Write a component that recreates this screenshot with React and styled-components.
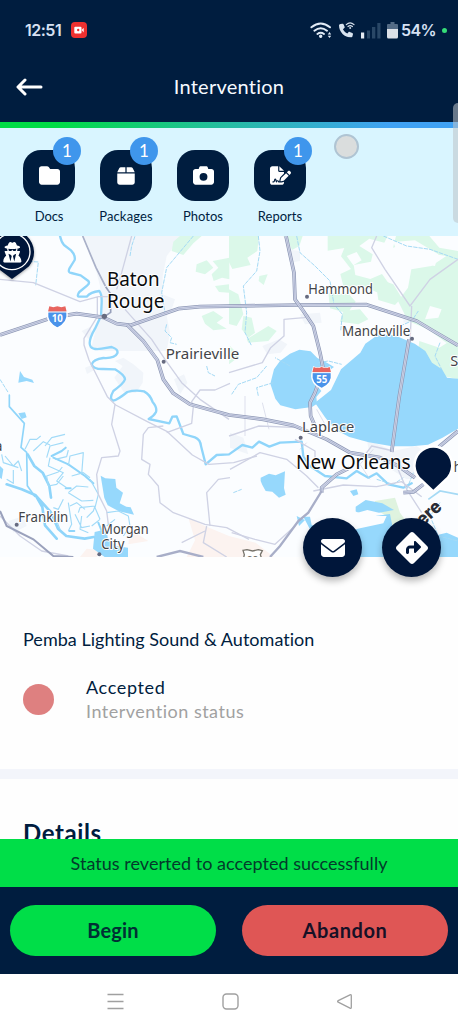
import React from "react";
import styled, { createGlobalStyle } from "styled-components";
import {
  FaFolder,
  FaBox,
  FaCamera,
  FaFileSignature,
  FaEnvelope,
  FaDiamondTurnRight,
  FaPhone,
  FaUserSecret,
} from "react-icons/fa6";

const navy = "#001d3f";
const deep = "#00163a";
const green = "#00de48";

const GlobalStyle = createGlobalStyle`
  * { box-sizing: border-box; }
  body { margin: 0; background: #fff; font-family: Lato, "Open Sans", sans-serif; color: ${navy}; }
  button { border: 0; padding: 0; font: inherit; color: inherit; background: none; }
`;

const Screen = styled.div`
  position: relative;
  width: 458px;
  height: 1027px;
  display: flex;
  flex-direction: column;
  overflow: hidden;
  background: #fefefe;
`;

const StatusBar = styled.div`
  height: 60px;
  flex: none;
  display: flex;
  align-items: center;
  padding: 0 11px 0 25px;
  background: ${navy};
  color: #d6e1f3;
`;
const Clock = styled.span`
  width: 46px;
  font: 600 16px/20px Inter, sans-serif;
  letter-spacing: -0.5px;
`;
const Indicators = styled.div`
  margin-left: auto;
  display: flex;
  align-items: center;
`;
const Percent = styled.span`
  font: 600 16px/20px Inter, sans-serif;
  letter-spacing: -0.6px;
  margin: 0 6px 0 3px;
`;
const LiveDot = styled.i`
  width: 5px;
  height: 5px;
  border-radius: 50%;
  background: #35dd78;
`;

const Header = styled.header`
  height: 62px;
  flex: none;
  display: grid;
  grid-template-columns: 60px 1fr 60px;
  align-items: center;
  background: ${navy};
  color: #f6faff;
  padding-bottom: 8px;
`;
const BackButton = styled.button`
  padding-left: 16px;
  display: flex;
`;
const Title = styled.h1`
  margin: 0;
  padding-bottom: 2px;
  text-align: center;
  font-size: 20px;
  font-weight: 400;
  line-height: 26px;
  letter-spacing: 0.25px;
`;
const Accent = styled.div`
  height: 6px;
  flex: none;
  background: linear-gradient(90deg, #00dc46 12%, #25bd9e 48%, #40a2f4 85%);
`;

const Shortcuts = styled.nav`
  height: 108px;
  flex: none;
  display: flex;
  gap: 13px;
  padding: 22px 17px 0;
  background: #d9f5ff;
`;
const Shortcut = styled.div`
  width: 64px;
  display: flex;
  flex-direction: column;
  align-items: center;
  gap: 7px;
`;
const Tile = styled.div`
  position: relative;
  width: 52px;
  height: 51px;
  border-radius: 18px;
  display: grid;
  place-items: center;
  background: ${navy};
  color: #fff;
  font-size: ${(p) => p.$icon || 21}px;
`;
const Badge = styled.span`
  position: absolute;
  top: -13px;
  right: -6px;
  width: 28px;
  height: 28px;
  border-radius: 50%;
  display: grid;
  place-items: center;
  background: #3f96ec;
  font-size: 17px;
  line-height: 28px;
`;
const ShortcutLabel = styled.span`
  font-size: 13px;
  line-height: 17px;
  letter-spacing: ${(p) => p.$track || 0}px;
  white-space: nowrap;
`;

const MapArea = styled.section`
  position: relative;
  height: 321px;
  flex: none;
`;
const MapCanvas = styled.svg`
  display: block;
  width: 458px;
  height: 321px;
`;
const Actions = styled.div`
  position: absolute;
  right: 17px;
  bottom: -20px;
  display: flex;
  gap: 20px;
`;
const RoundButton = styled.button`
  width: 59px;
  height: 59px;
  border-radius: 50%;
  display: grid;
  place-items: center;
  background: ${deep};
  color: #fff;
  font-size: ${(p) => p.$icon}px;
  box-shadow: 0 4px 7px rgba(0, 0, 0, 0.28);
`;

const Summary = styled.section`
  height: 212px;
  flex: none;
  padding: 69px 23px 0;
`;
const Company = styled.h2`
  margin: 0;
  font-size: 18px;
  font-weight: 400;
  line-height: 26px;
  letter-spacing: 0.02px;
  white-space: nowrap;
`;
const StatusRow = styled.div`
  display: flex;
  align-items: center;
  gap: 32px;
  margin-top: 23px;
`;
const StatusDot = styled.i`
  width: 31px;
  height: 31px;
  border-radius: 50%;
  background: #de8080;
`;
const StatusText = styled.div`
  display: flex;
  flex-direction: column;
  font-size: 18px;
  line-height: 24px;
`;
const StatusName = styled.span`
  letter-spacing: 0.65px;
`;
const StatusCaption = styled.span`
  color: #a1a1a1;
  letter-spacing: 0.5px;
`;

const Details = styled.section`
  height: 70px;
  flex: none;
  overflow: hidden;
  border-top: 10px solid #f3f5fb;
  padding: 37px 23px 0;
`;
const DetailsTitle = styled.h2`
  margin: 0;
  font: 700 24px/34px Lato, sans-serif;
  letter-spacing: 0.6px;
`;

const Toast = styled.div`
  height: 48px;
  flex: none;
  display: grid;
  place-items: center;
  background: ${green};
  color: #033b2b;
  font-size: 18px;
  letter-spacing: 0.03px;
`;
const Footer = styled.div`
  height: 87px;
  flex: none;
  display: flex;
  gap: 26px;
  padding: 18px 10px;
  background: ${navy};
`;
const Pill = styled.button`
  flex: 1;
  height: 51px;
  border-radius: 26px;
  padding-bottom: 1px;
  background: ${(p) => p.$bg};
  color: ${(p) => p.$fg};
  font-size: 20px;
  font-weight: 700;
  letter-spacing: ${(p) => p.$track}px;
`;
const SystemNav = styled.div`
  height: 53px;
  flex: none;
  display: flex;
  align-items: center;
  justify-content: space-between;
  padding: 2px 105px 0 107px;
  background: #fff;
`;

const TouchMark = styled.i`
  position: absolute;
  left: 334px;
  top: 134px;
  width: 25px;
  height: 25px;
  border-radius: 50%;
  background: #dadddd;
  border: 2px solid #afc4d3;
`;
const EdgeHandle = styled.i`
  position: absolute;
  right: 0;
  top: 103px;
  width: 5px;
  height: 120px;
  border-radius: 5px 0 0 5px;
  background: rgba(190, 195, 201, 0.55);
`;

const shortcuts = [
  { label: "Docs", icon: FaFolder, count: 1, track: -0.1 },
  { label: "Packages", icon: FaBox, count: 1, track: 0.15, size: 20 },
  { label: "Photos", icon: FaCamera, track: 0 },
  { label: "Reports", icon: FaFileSignature, count: 1, track: 0, size: 21 },
];

const water = "#96d8fc";

const Road = ({ d }) => (
  <g fill="none" strokeLinejoin="round">
    <path d={d} stroke="#8e98b5" strokeWidth="11" />
    <path d={d} stroke="#d7dcef" strokeWidth="6.5" />
    <path d={d} stroke="#8e98b5" strokeWidth="1.6" />
  </g>
);

/* A label is one or more lines, each fitted to its own width. */
const Place = ({ x, y, lines, leading = 46, size = 42, city }) => (
  <text
    fontFamily='"Noto Sans", "Open Sans", sans-serif'
    fontSize={size}
    fill={city ? "#080a0c" : "#424448"}
    stroke="#fff"
    strokeWidth="6"
    strokeLinejoin="round"
    paintOrder="stroke"
  >
    {lines.map(([text, width], i) => (
      <tspan key={text} x={x} y={y + i * leading} textLength={width} lengthAdjust="spacingAndGlyphs">
        {text}
      </tspan>
    ))}
  </text>
);

const Interstate = ({ x, y, number }) => (
  <g transform={`translate(${x} ${y})`}>
    <path d="M-24-31Q-12-26 0-31Q12-26 24-31L29-12Q34 18 0 34Q-34 18-29-12Z" fill="#4a93ea" stroke="#fff" strokeWidth="4" />
    <path d="M-24-31Q-12-26 0-31Q12-26 24-31L28-15H-28Z" fill="#e8655f" />
    <path d="M-29-14H29" stroke="#fff" strokeWidth="3" />
    <text y="16" textAnchor="middle" fontFamily='"Open Sans", sans-serif' fontWeight="700" fontSize="29" fill="#fff">
      {number}
    </text>
  </g>
);

function RegionMap() {
  return (
    <MapCanvas viewBox="0 0 1374 963">
      <rect width="1374" height="963" fill="#fbfdff" />

      {/* built-up areas */}
      <g fill="#f1f5fa">
        <path d="M248 0H545L500 60 488 120 487 175 525 190 515 220 500 240 510 290 500 345H300L275 330 290 270 305 230 300 150 290 110Z" />
        <path d="M245 285l25-12 10 25-12 14zM255 395l20-8 8 15-22 12zM345 375l25-10 30 20 30 25-2 30-20 30-35 0-30-45 25-35z" />
        <path d="M787 330l50-20 25 15-20 25-40 5zM900 235l60-5 5 30-50 5zM860 40l40 5v30l-30 5zM1215 200l50 15-5 40-50 5zM1100 610l80 35 70-15 40 30-10 60-60 10-110-70z" />
        <path d="M690 590l40 15 15 50-55-20zM522 430l30-15 10 25-22 35zM25 855l45-15 10 30-40 20z" />
      </g>

      {/* sandy areas */}
      <path d="M565 845l50 25 72 30 80 20 55 43H560l25-50zM240 963l20-25 45 5-15 20zM390 880l55 35-60 10z" fill="#fcf3f0" />

      {/* woodland */}
      <g fill="#dbf8e9">
        <path d="M540 0h65l-25 22-30 35-35-12 5-28zM590 85l30-12 20 22-25 20-28-8zM638 75l50-10v65l-22-5-25 10-6-20 20-20zM605 240l35-15 30 20-20 15 30 18-40 5-25-20zM645 150l42-5v25l-30-2z" />
        <path d="M687 0h90l-5 45-30 20 10 22-55 12-10-20zM850 0h58l-10 30-22 12-8-18zM778 120l25-5-12 32-15-12zM687 160l28 15 15 60-20 35-23-6zM730 240l25 5 10 45-20 15-20-25z" />
        <path d="M983 0h180l-10 20-45-12-30 22 40 25-5 22-52 10 5 30 45 12 35-15 25 35-40 20-45-20-55 5-10-40 32-15-30-38 10-25-50 8z" />
        <path d="M1188 0h100l30 35 56 10v270l-35 5-55-40-60-25-30-60 30-40 10-55 60-10 45-30-65-10-60-25-35 10z" />
        <path d="M1125 125l55 20 25 40-20 22-50-15zM985 170l62 5 20 22-25 35-52-15zM1030 225l50-5 25 30-30 15-55-8zM740 310l65-40 25 15-25 30-60 5zM690 330l30 30-33 25z" />
        <path d="M1258 315l60 20 56-35v130l-55-12-25-30-40-42z" />
        <path d="M1125 795l60-10 15 45 40 55-35 50-45-95-35-20z" fill="#dff3df" />
      </g>
      <g fill="#fbfdff">
        <path d="M1180 18l65-5 70 42-10 35-65-10-50-35zM1040 60l30-12 15 25-25 15zM1150 100l35 5 5 20-25 5zM1290 210l35 10-10 25-40 5zM1080 180l20-10 20 15-20 10z" />
      </g>

      {/* lakes and bays */}
      <g fill={water}>
        <path d="M822 400l18-25 30-22 28-12 34 5 20 20 30 15 20 12-45 32-5 25 12 15-15 18 2 20-15 10-50 7-45-12-15-20-15-45z" />
        <path d="M945 500l48-38 30-62 58-50 15-27 38-27 50 2 60 25 32 22 20 35 30 20 15 25 33 3v150l-48 28-42 20-48 5-60 0-70-12-58-16-45-24-28-35z" />
        <path d="M302 719l14 8 30 2 3 26 20 15-10 32 20 10 13 2 10 22-45-10-34-18-10-22z" />
        <path d="M782 725l25-12 20 5 28-12-3 50 5 20-20 9-20-18-20-2-10-18-5-12zM1067 812l30-20 50 10 35 20-45 8-35-8-35 10zM1050 765l20-5 5 15-15 5z" />
        <path d="M284 888l35-8 5 30 25 20 35 5v28h-70l-35-25zM910 842l20 0 5 25 60 15 35-5 45-18 55-20 40-5 10 50 40 30-10 49H1070l-35-30-90-25z" />
        <path d="M0 690l10 10-5 30-5-5zM55 532l20-3 5 15-15 5zM60 405l12 18 25 8 5 10-22-6-25 5zM890 840l25 12-18 18zM1300 900l40-10 34 15v58h-60z" />
      </g>
      <path d="M950 840l40-25 60 5 50 20 60 0-10 22-70 15-60 15-30-25z" fill="#fbfdff" />

      {/* rivers */}
      <g fill="none" stroke="#8fd5fa" strokeLinejoin="round" strokeLinecap="round">
        <path d="M180 0Q184 18 192 27L213 43Q227 58 224 72L208 98Q203 110 214 111L242 118 265 135Q270 142 262 148L238 168Q228 182 240 182L260 182Q272 168 298 165Q306 175 305 200L303 240 285 278Q262 318 272 332Q280 342 305 338L335 333Q356 340 352 352Q345 368 310 366Q280 370 275 385Q280 400 310 399L345 400Q375 418 375 430Q372 442 340 465Q326 490 340 494Q352 492 382 468Q405 461 432 466Q450 475 458 498Q472 515 468 528Q462 540 446 549L508 562 517 542 530 541 550 594 585 604Q601 610 603 630L617 685 650 657 687 655 727 627 757 635 777 617 808 632 840 620 905 617 910 662 930 690 975 720 1040 727 1070 705 1105 725 1130 712 1165 745 1210 755 1235 742" strokeWidth="7" />
        <path d="M28 477v35l45 50-10 72 17 15 2 100 22 32" strokeWidth="5" />
        <path d="M83 655l20 35 25 20 20 40 5 35M20 745l45 15 42 18 20 35 8 55 35 40M107 778l45 50 22 50 25 22 55 8 27-5" strokeWidth="8" />
        <path d="M155 660l30-15 12-10M160 665l45 20 50 35 25 22M197 757h15M208 885h15M295 860l10 25" strokeWidth="6" />
      </g>
      <path
        d="M75 640l15-30 20 0 12-10M100 645l30-28 20 10M135 630l20-25 40-10M140 665l10-35 40-10M150 665l-5 25 45 20-20 25 30 20M165 670l35-8 5-20M205 690l5-30 40-10-5 65M215 720l35-10 20 15M145 750l-5-30 35-12 12-15M145 750l25-5 20-25M205 770l25-20 35 3M205 770l40 25 35-2M210 810l20-10 25 20M235 830l5-15 45-5-5 15M260 845l20-20 5-15M245 840l-5 40 25 10M190 790l-15 30-15-5M180 830l-10 25 10 25M205 800l10 65-10 20M225 835l20 40 25-5M15 660l25 30 15-15 10 30M20 730l20 12 0-40M5 655l5 25 45 15M320 830l35-5 30 15 5 30-20 30M345 850l-25 20M270 730l25 45-10 40 15 35M275 870l25-20"
        fill="none"
        stroke="#a2dbf8"
        strokeWidth="3.5"
        strokeLinejoin="round"
      />
      <path
        d="M390 60l5-30 10-30M775 0l5 45-10 60-40 45 10 80-5 60 20 40M890 0l10 50 45 40 45 45 12 70 25 30-5 50M500 265l-5 20 20 20-5 15 20 5M1150 0l70 30 70 10 84 30M580 0l-80 95-15 75 10 60M1200 270l35-15 20-30M1320 320l-15 40 20 40M70 75l45 3-8 70M0 430l25 40M620 390l5 20 20 10M800 390l-30 35-55 20-20 30M820 440l-50 15 5 25M870 390l-45-25M955 380l30-5 40 10M1130 730l50 15 30-20M1320 800l-30 40 25 60 59 15M1220 760l20-50M700 770l25-10"
        fill="none"
        stroke="#a5daf5"
        strokeWidth="3"
        strokeDasharray="13 3"
      />
      <path d="M1285 790l35-25 54 10" fill="none" stroke="#a5daf5" strokeWidth="5" />

      {/* secondary roads */}
      <g fill="none" stroke="#cfd2e4" strokeWidth="4" strokeLinejoin="round">
        <path d="M0 130l100 10 140 57 55-15h45M292 182v60l-40 65v20l15 45 55 110 25 25 95 50 60 30 75 70 50 28 74-5 70-20" />
        <path d="M395 0l-30 110-15 50M375 220l80 90 40 60 50 70 55 50 87 60M345 505l-10 60 25 80-5 15-50 5-15 50 5 60 25 50 5 40M490 570l-45 5-15 20-5 75 25 15-5 30 30 35 5 50 40 30 95 35 65 10 67 35M500 590l75-28 5-50-5-15 25-35h45l45-20" />
        <path d="M687 410l100-30 25-45 40-35 0-50 60-5 15-5M1130 0l-15 35 40 65 75 110 60-80 84-60M1235 210l-5 110M687 600l90-30 120 5M690 700l90-50 80 20 60 50 35 35M885 610l60 35 0 50M695 890l70 20 60 15 60-55M630 870l-10-100 35-40 35-5M620 870l-10 50 70 43" />
        <path d="M940 765l90-18 100 5 75-15 60 45M1085 670l30-40 65 15M1190 690l30 70 45 70M545 920l70-35M0 840l60 60 65 45 80 15" />
        <path d="M735 480v120M787 500l20 80M900 640l20-20M950 520l25 45M1120 640l-40 45 30 45" strokeWidth="2" />
      </g>
      <path d="M248 0l40 95 28 55" fill="none" stroke="#a9b0c8" strokeWidth="5" />

      {/* highways */}
      <Road d="M0 297L155 245 230 233 310 244 350 263 392 268 535 218 600 212 890 207 1100 206 1250 255 1300 285 1374 328" />
      <Road d="M382 267L430 315 472 372 490 430 520 472 570 505 687 537 790 550 880 568 980 610 1050 650 1140 665 1195 690 1245 725" />
      <Road d="M858 0L882 110 885 190 910 225 940 270 960 350 970 400 945 470 930 500 932 540 945 570" />
      <Road d="M1227 310L1198 480 1175 648" />
      <Road d="M1374 585L1320 630 1260 700M1270 745L1240 768 1210 770M1050 695L1010 715 965 755 965 770" />
      <path d="M965 765l-40 65-30 25-55 75-30 33M470 963l70-18 70 18" fill="none" stroke="#a8aec8" strokeWidth="7" />
      <path d="M0 825l20 45 80 40 60 50 60 3" fill="none" stroke="#9aa1bc" strokeWidth="6" />
      <path d="M310 244l22-15v-55l-15-22" fill="none" stroke="#969fba" strokeWidth="5" />

      {/* place dots */}
      <g fill="#666b80">
        <circle cx="313" cy="241" r="8" />
        <circle cx="491" cy="377" r="6" />
        <circle cx="921" cy="182" r="6" />
        <circle cx="1236" cy="308" r="6" />
        <circle cx="902" cy="605" r="6" />
        <circle cx="50" cy="866" r="6" />
        <circle cx="298" cy="955" r="6" />
      </g>

      <Place x={321} y={151} leading={66} size={57} city lines={[["Baton", 158], ["Rouge", 172]]} />
      <Place x={497} y={369} lines={[["Prairieville", 221]]} />
      <Place x={925} y={175} lines={[["Hammond", 194]]} />
      <Place x={1026} y={300} lines={[["Mandeville", 205]]} />
      <Place x={1351} y={390} lines={[["S", 24]]} />
      <Place x={906} y={587} lines={[["Laplace", 157]]} />
      <Place x={888} y={699} size={57} city lines={[["New Orleans", 344]]} />
      <Place x={1361} y={708} lines={[["h", 23]]} />
      <Place x={-16} y={646} lines={[["a", 23]]} />
      <Place x={55} y={858} lines={[["Franklin", 150]]} />
      <Place x={304} y={893} lines={[["Morgan", 142], ["City", 69]]} />

      <Interstate x={172} y={242} number="10" />
      <Interstate x={965} y={424} number="55" />
      <g>
        <path d="M729 943l12-2 17 4 17-4 12 3-6 12 6 18h-58l4-18z" fill="#fff" stroke="#77736b" strokeWidth="4" />
        <text x="758" y="979" textAnchor="middle" fontFamily="Open Sans" fontWeight="700" fontSize="28" fill="#77736b">90</text>
      </g>

      {/* job site marker with its rotated caption */}
      <text
        transform="translate(1268 872) rotate(-42)"
        fontFamily="Inter, sans-serif"
        fontWeight="800"
        fontSize="55"
        textLength="82"
        lengthAdjust="spacingAndGlyphs"
        fill="#292c35"
        stroke="#fff"
        strokeWidth="5"
        paintOrder="stroke"
      >
        ere
      </text>
      <path d="M1300 761L1266 729A53 53 0 1 1 1334 729Z" fill={deep} stroke="#fff" strokeWidth="15" strokeLinejoin="round" paintOrder="stroke" />

      {/* technician marker */}
      <g filter="drop-shadow(0 3px 4px rgba(0,0,0,.35))">
        <path d="M36 129L-15 91A66 66 0 1 1 87 91Q65 109 36 129Z" fill={deep} />
      </g>
      <circle cx="36" cy="47" r="54" fill={deep} stroke="#fff" strokeWidth="4" />
      <FaUserSecret x="6" y="18" size={62} color="#fff" />
    </MapCanvas>
  );
}

const BackArrow = () => (
  <svg width="27" height="18" viewBox="0 0 27 18" fill="none" stroke="#fff" strokeWidth="3" strokeLinecap="round" strokeLinejoin="round">
    <path d="M9 2L2 9l7 7M2.5 9H25" />
  </svg>
);

const RecordingIcon = () => (
  <svg width="16" height="16" viewBox="0 0 16 16">
    <rect width="16" height="16" rx="4" fill="#ee302f" />
    <rect x="3.3" y="4.7" width="7.2" height="6.8" rx="1" fill="#fff" />
    <path d="M10.7 8l2-2.2v4.8z" fill="#fff" />
    <circle cx="7.2" cy="8" r="1.2" fill="#ee302f" />
  </svg>
);

const WifiIcon = () => (
  <svg width="23" height="17" viewBox="0 0 23 17" fill="none" stroke="#e1ebf6" strokeWidth="1.9" strokeLinecap="round">
    <path d="M1.4 5.3Q10.7-2.4 20 5.3M4.4 8.7Q10.7 3.6 17 8.7M7.4 11.9Q10.7 9.5 14 11.9" />
    <circle cx="10.7" cy="14.3" r="1.1" fill="#e1ebf6" stroke="#e1ebf6" strokeWidth="1.2" />
    <path d="M17.8 12.5l1.7-2.4 1.7 2.4zM17.8 13.7l1.7 2.4 1.7-2.4z" fill="#e1ebf6" stroke="none" />
  </svg>
);

const CallIcon = () => (
  <svg width="16" height="16" viewBox="0 0 16 16" fill="none" stroke="#d8e3ef" strokeWidth="1.2" strokeLinecap="round">
    <FaPhone x="0" y="1.5" size={14} color="#d8e3ef" strokeWidth="0" />
    <path d="M7.3 2.6Q11-.8 15 2.6M9 4.5Q11.2 2.8 13.4 4.5" />
    <circle cx="11.2" cy="6" r=".4" />
  </svg>
);

const SignalIcon = () => (
  <svg width="20" height="17" viewBox="0 0 20 17">
    <rect y="10.5" width="3.2" height="6" fill="#e4eaf1" />
    <path d="M6 8.5h3v8H6zM11 5h3.3v11.5H11zM16.3 1H19.5v15.5h-3.2z" fill="#294766" />
  </svg>
);

const BatteryIcon = () => (
  <svg width="11" height="17" viewBox="0 0 11 17">
    <path d="M3.5 0h4v2H10a1 1 0 0 1 1 1v5H0V3a1 1 0 0 1 1-1h2.5z" fill="#536b86" />
    <path d="M0 7h11v8a1.5 1.5 0 0 1-1.5 1.5h-8A1.5 1.5 0 0 1 0 15z" fill="#dce1e7" />
  </svg>
);

const StatusIcons = styled.div`
  display: flex;
  align-items: center;
  gap: ${(p) => p.$gap}px;
`;

export default function App() {
  return (
    <Screen>
      <GlobalStyle />
      <StatusBar>
        <Clock>12:51</Clock>
        <RecordingIcon />
        <Indicators>
          <StatusIcons $gap={6}>
            <WifiIcon />
            <CallIcon />
            <SignalIcon />
            <BatteryIcon />
          </StatusIcons>
          <Percent>54%</Percent>
          <LiveDot />
        </Indicators>
      </StatusBar>
      <Header>
        <BackButton aria-label="Back">
          <BackArrow />
        </BackButton>
        <Title>Intervention</Title>
      </Header>
      <Accent />
      <Shortcuts>
        {shortcuts.map(({ label, icon: Icon, count, track, size }) => (
          <Shortcut key={label}>
            <Tile $icon={size}>
              <Icon />
              {count && <Badge>{count}</Badge>}
            </Tile>
            <ShortcutLabel $track={track}>{label}</ShortcutLabel>
          </Shortcut>
        ))}
      </Shortcuts>
      <MapArea>
        <RegionMap />
        <Actions>
          <RoundButton $icon={24} aria-label="Message">
            <FaEnvelope />
          </RoundButton>
          <RoundButton $icon={32} aria-label="Directions">
            <FaDiamondTurnRight />
          </RoundButton>
        </Actions>
      </MapArea>
      <Summary>
        <Company>Pemba Lighting Sound &amp; Automation</Company>
        <StatusRow>
          <StatusDot />
          <StatusText>
            <StatusName>Accepted</StatusName>
            <StatusCaption>Intervention status</StatusCaption>
          </StatusText>
        </StatusRow>
      </Summary>
      <Details>
        <DetailsTitle>Details</DetailsTitle>
      </Details>
      <Toast>Status reverted to accepted successfully</Toast>
      <Footer>
        <Pill $bg={green} $fg="#003034" $track={0.2}>Begin</Pill>
        <Pill $bg="#df5655" $fg="#171126" $track={0.6}>Abandon</Pill>
      </Footer>
      <SystemNav>
        <svg width="17" height="17" viewBox="0 0 17 17" stroke="#a0a0a0" strokeWidth="1.5">
          <path d="M.5 1.5h16M.5 8.5h16M.5 15.5h16" />
        </svg>
        <svg width="17" height="17" viewBox="0 0 17 17" fill="none" stroke="#a0a0a0" strokeWidth="1.4">
          <rect x="1" y="1" width="15" height="15" rx="3.5" />
        </svg>
        <svg width="17" height="17" viewBox="0 0 17 17" fill="none" stroke="#a0a0a0" strokeWidth="1.3" strokeLinejoin="round">
          <path d="M14 1.8L2.2 7.6q-1.2.8 0 1.6L14 15.2q1.3.5 1.3-.9V2.7q0-1.3-1.3-.9z" />
        </svg>
      </SystemNav>
      <TouchMark />
      <EdgeHandle />
    </Screen>
  );
}
